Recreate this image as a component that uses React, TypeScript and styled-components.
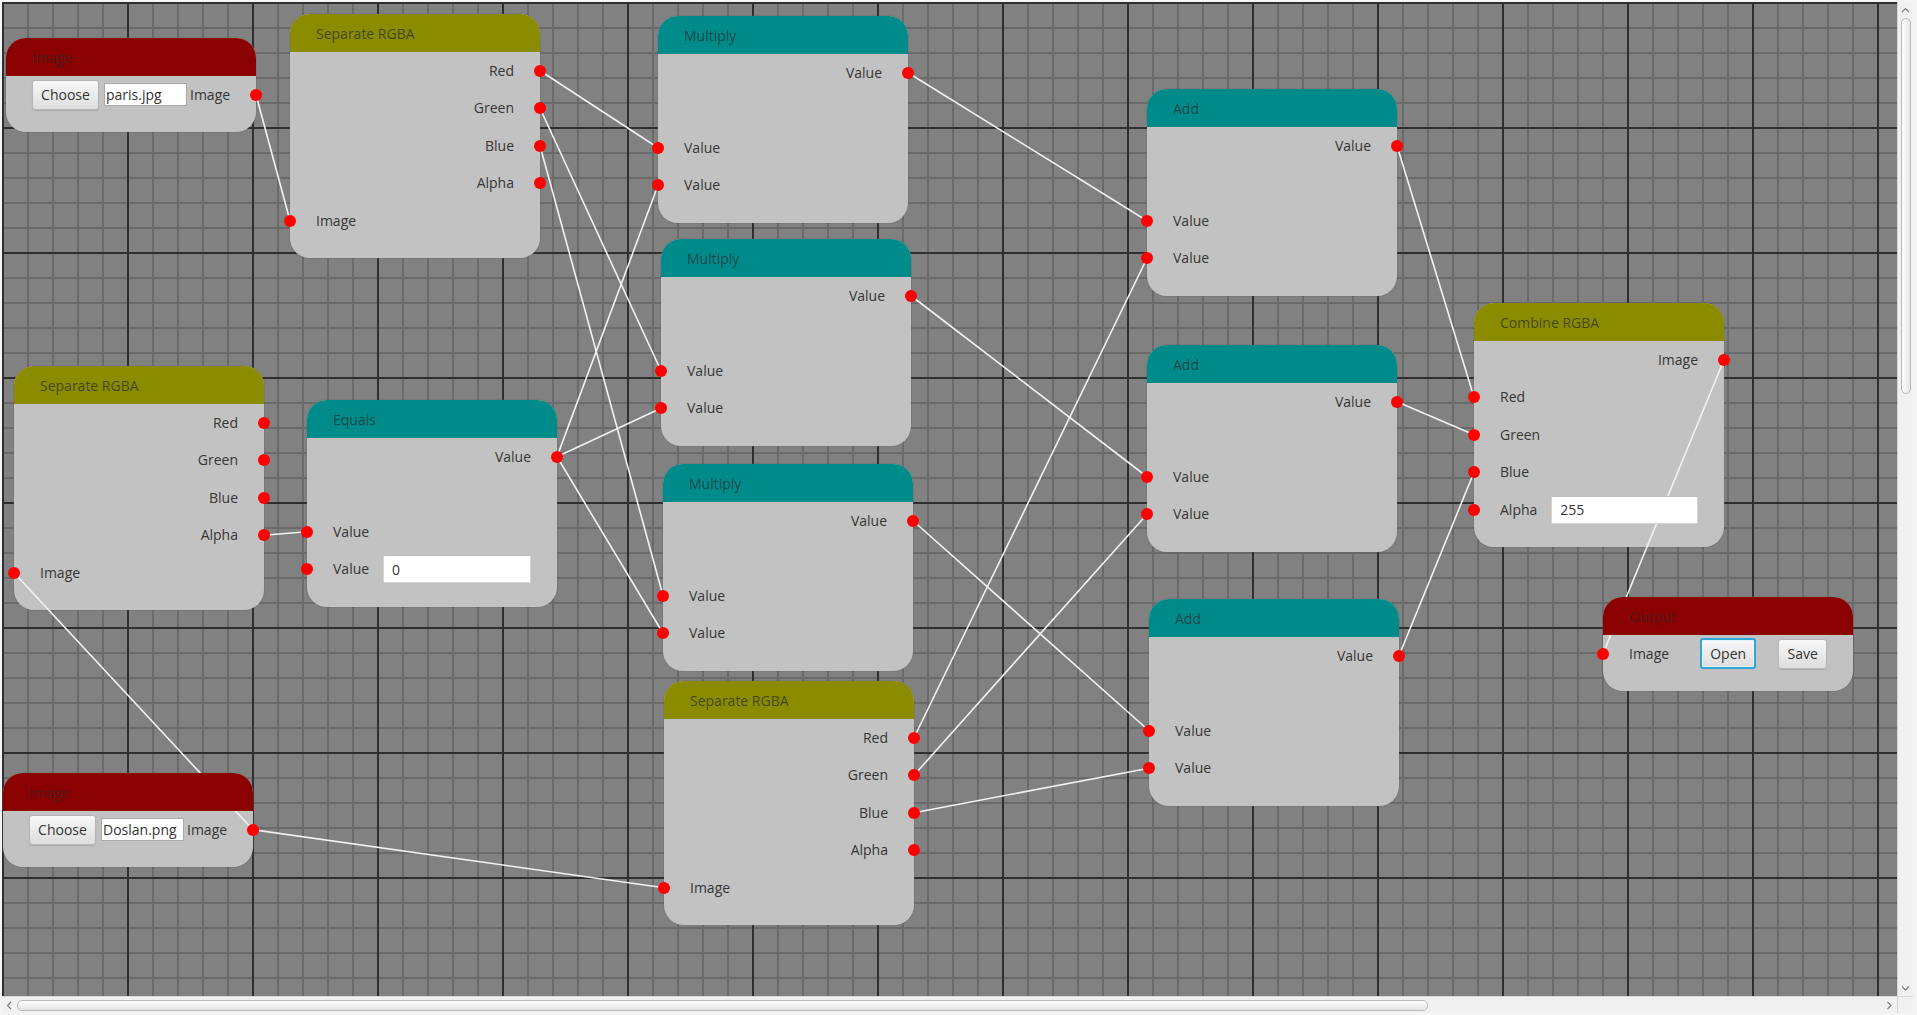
import React from 'react';
import styled, { createGlobalStyle, css } from 'styled-components';

const GlobalStyle = createGlobalStyle`
  html, body { margin: 0; padding: 0; }
  body {
    background: #f2f2f2;
    font-family: "Open Sans", "Noto Sans", "DejaVu Sans", sans-serif;
    overflow: hidden;
  }
  #root { width: 1917px; height: 1015px; }
`;

type Tone = 'red' | 'teal' | 'olive';

type RowDef =
  | { kind: 'out'; label: string }
  | { kind: 'in'; label: string; field?: string }
  | { kind: 'gap' }
  | { kind: 'file'; file: string }
  | { kind: 'output' };

type NodeDef = {
  id: string;
  title: string;
  tone: Tone;
  x: number;
  y: number;
  rows: RowDef[];
};

const CANVAS_X = 2;
const CANVAS_Y = 2;
const NODE_W = 250;
const HEADER_H = 38;
const ROW_H = 37.5;

const sep = (id: string, x: number, y: number): NodeDef => ({
  id,
  title: 'Separate RGBA',
  tone: 'olive',
  x,
  y,
  rows: [
    { kind: 'out', label: 'Red' },
    { kind: 'out', label: 'Green' },
    { kind: 'out', label: 'Blue' },
    { kind: 'out', label: 'Alpha' },
    { kind: 'in', label: 'Image' },
  ],
});

const binary = (id: string, title: string, x: number, y: number, field?: string): NodeDef => ({
  id,
  title,
  tone: 'teal',
  x,
  y,
  rows: [
    { kind: 'out', label: 'Value' },
    { kind: 'gap' },
    { kind: 'in', label: 'Value' },
    { kind: 'in', label: 'Value', field },
  ],
});

const nodes: NodeDef[] = [
  { id: 'img1', title: 'Image', tone: 'red', x: 6, y: 38, rows: [{ kind: 'file', file: 'paris.jpg' }] },
  sep('sepA', 290, 14),
  binary('mulA', 'Multiply', 658, 16),
  binary('mulB', 'Multiply', 661, 239),
  binary('mulC', 'Multiply', 663, 464),
  sep('sepC', 664, 681),
  binary('addA', 'Add', 1147, 89),
  binary('addB', 'Add', 1147, 345),
  binary('addC', 'Add', 1149, 599),
  {
    id: 'combine',
    title: 'Combine RGBA',
    tone: 'olive',
    x: 1474,
    y: 303,
    rows: [
      { kind: 'out', label: 'Image' },
      { kind: 'in', label: 'Red' },
      { kind: 'in', label: 'Green' },
      { kind: 'in', label: 'Blue' },
      { kind: 'in', label: 'Alpha', field: '255' },
    ],
  },
  { id: 'output', title: 'Output', tone: 'red', x: 1603, y: 597, rows: [{ kind: 'output' }] },
  sep('sepB', 14, 366),
  binary('equals', 'Equals', 307, 400, '0'),
  { id: 'img2', title: 'Image', tone: 'red', x: 3, y: 773, rows: [{ kind: 'file', file: 'Doslan.png' }] },
];

const wires: [string, number, string, number][] = [
  ['img1', 0, 'sepA', 4],
  ['sepA', 0, 'mulA', 2],
  ['sepA', 1, 'mulB', 2],
  ['sepA', 2, 'mulC', 2],
  ['equals', 0, 'mulA', 3],
  ['equals', 0, 'mulB', 3],
  ['equals', 0, 'mulC', 3],
  ['sepB', 3, 'equals', 2],
  ['sepB', 4, 'img2', 0],
  ['img2', 0, 'sepC', 4],
  ['mulA', 0, 'addA', 2],
  ['mulB', 0, 'addB', 2],
  ['mulC', 0, 'addC', 2],
  ['sepC', 0, 'addA', 3],
  ['sepC', 1, 'addB', 3],
  ['sepC', 2, 'addC', 3],
  ['addA', 0, 'combine', 1],
  ['addB', 0, 'combine', 2],
  ['addC', 0, 'combine', 3],
  ['combine', 0, 'output', 0],
];

const isOutRow = (r: RowDef) => r.kind === 'out' || r.kind === 'file';

const portPoint = (id: string, row: number) => {
  const n = nodes.find((k) => k.id === id)!;
  const r = n.rows[row];
  const y = n.y + HEADER_H + ROW_H / 2 + ROW_H * row - CANVAS_Y;
  const x = (isOutRow(r) ? n.x + NODE_W : n.x) - CANVAS_X;
  return { x, y };
};

const toneColor: Record<Tone, string> = {
  red: '#8b0000',
  teal: '#008b8b',
  olive: '#8b8b00',
};

/* ---------- window + scroll pane ---------- */

const Window = styled.div`
  width: 1917px;
  height: 1015px;
  box-sizing: border-box;
  padding: 2px 4px 2px 2px;
  background: #f4f4f4;
`;

const ScrollPane = styled.div`
  display: grid;
  grid-template-columns: 1fr 16px;
  grid-template-rows: 1fr 17px;
  width: 100%;
  height: 100%;
`;

const Canvas = styled.div`
  position: relative;
  overflow: hidden;
  background-color: #818181;
  background-image: linear-gradient(to right, #2f2f2f 0, #2f2f2f 2px, transparent 2px),
    linear-gradient(to bottom, #2f2f2f 0, #2f2f2f 2px, transparent 2px),
    linear-gradient(to right, #6a6a6a 0, #6a6a6a 2px, transparent 2px),
    linear-gradient(to bottom, #6a6a6a 0, #6a6a6a 2px, transparent 2px);
  background-size: 125px 100%, 100% 125px, 25px 100%, 100% 25px;
  background-position: 0 0;
`;

const VScroll = styled.div`
  display: flex;
  flex-direction: column;
  align-items: center;
  background: #f1f1f1;
  border-left: 1px solid #d6d6d6;
`;

const HScroll = styled.div`
  display: flex;
  align-items: center;
  background: #f1f1f1;
  border-top: 1px solid #d6d6d6;
`;

const Corner = styled.div`
  background: #f1f1f1;
  border-top: 1px solid #d6d6d6;
  border-left: 1px solid #d6d6d6;
`;

const ArrowBox = styled.div<{ $w: number; $h: number }>`
  width: ${(p) => p.$w}px;
  height: ${(p) => p.$h}px;
  display: flex;
  align-items: center;
  justify-content: center;
  flex: none;
`;

const Spacer = styled.div`
  flex: 1;
`;

const VThumb = styled.div`
  width: 10px;
  height: 376px;
  margin-left: 1px;
  box-sizing: border-box;
  border: 1px solid #b9b9b9;
  border-radius: 5px;
  background: linear-gradient(to right, #fdfdfd, #e6e6e6);
`;

const HThumb = styled.div`
  width: 1411px;
  height: 11px;
  box-sizing: border-box;
  border: 1px solid #b9b9b9;
  border-radius: 5px;
  background: linear-gradient(to bottom, #fdfdfd, #e6e6e6);
`;

const Chevron = ({ dir }: { dir: 'up' | 'down' | 'left' | 'right' }) => {
  const d = {
    up: 'M1 5 L4.5 1.5 L8 5',
    down: 'M1 1.5 L4.5 5 L8 1.5',
    left: 'M5 1 L1.5 4.5 L5 8',
    right: 'M1.5 1 L5 4.5 L1.5 8',
  }[dir];
  const vertical = dir === 'up' || dir === 'down';
  return (
    <svg width={vertical ? 9 : 7} height={vertical ? 7 : 9} viewBox={vertical ? '0 0 9 7' : '0 0 7 9'}>
      <path d={d} fill="none" stroke="#7a7a7a" strokeWidth="1.1" />
    </svg>
  );
};

/* ---------- nodes ---------- */

const NodeCard = styled.div`
  position: absolute;
  width: ${NODE_W}px;
  display: flex;
  flex-direction: column;
  border-radius: 20px;
  background: #c2c2c2;
  box-shadow: 0 0 0 1px rgba(90, 90, 90, 0.18);
`;

const Header = styled.div<{ $tone: Tone }>`
  position: relative;
  z-index: 2;
  height: ${HEADER_H}px;
  display: flex;
  align-items: center;
  padding-left: 26px;
  border-radius: 20px 20px 0 0;
  background: ${(p) => toneColor[p.$tone]};
  color: rgba(40, 40, 40, 0.7);
  font-size: 14px;
`;

const Body = styled.div`
  display: flex;
  flex-direction: column;
  padding: 0 26px 18.5px;
`;

const Row = styled.div<{ $out?: boolean }>`
  position: relative;
  height: ${ROW_H}px;
  display: flex;
  align-items: center;
  justify-content: ${(p) => (p.$out ? 'flex-end' : 'flex-start')};
`;

const Port = styled.span<{ $out?: boolean }>`
  position: absolute;
  z-index: 2;
  top: 50%;
  width: 12px;
  height: 12px;
  margin-top: -6px;
  border-radius: 50%;
  background: #ff0000;
  ${(p) => (p.$out ? css`right: -32px;` : css`left: -32px;`)}
`;

const Label = styled.span`
  font-size: 14px;
  color: #363636;
  white-space: nowrap;
  line-height: 20px;
`;

const ValueField = styled.input`
  position: relative;
  z-index: 2;
  flex: 1;
  min-width: 0;
  height: 28px;
  box-sizing: border-box;
  margin-left: 14px;
  padding: 0 8px;
  border: 1px solid #d4d4d4;
  border-top-color: #bcbcbc;
  border-radius: 2px;
  background: #ffffff;
  font-family: inherit;
  font-size: 14px;
  color: #333;
  outline: none;
`;

const FileField = styled.input`
  position: relative;
  z-index: 2;
  width: 83px;
  height: 23px;
  box-sizing: border-box;
  margin: 0 3px 0 5px;
  padding: 0 1px;
  border: 1px solid #a9a9a9;
  background: #ffffff;
  font-family: inherit;
  font-size: 14px;
  color: #333;
  outline: none;
`;

const FxButton = styled.button<{ $w: number; $focused?: boolean; $ml?: number }>`
  position: relative;
  z-index: 2;
  width: ${(p) => p.$w}px;
  height: 30px;
  flex: none;
  box-sizing: border-box;
  margin-left: ${(p) => p.$ml ?? 0}px;
  padding: 0;
  border: 1px solid #b6b6b6;
  border-radius: 3px;
  background: linear-gradient(to bottom, #f8f8f8, #dddddd);
  box-shadow: 0 1px 1px rgba(0, 0, 0, 0.12);
  font-family: inherit;
  font-size: 14px;
  color: #333;
  ${(p) =>
    p.$focused &&
    css`
      height: 31px;
      border: 2px solid #2fa6d6;
      box-shadow: inset 0 0 0 1px #e6f4fb;
    `}
`;

const NodeRow = ({ row }: { row: RowDef }) => {
  switch (row.kind) {
    case 'gap':
      return <Row />;
    case 'out':
      return (
        <Row $out>
          <Label>{row.label}</Label>
          <Port $out />
        </Row>
      );
    case 'in':
      return (
        <Row>
          <Port />
          <Label>{row.label}</Label>
          {row.field !== undefined && <ValueField readOnly defaultValue={row.field} />}
        </Row>
      );
    case 'file':
      return (
        <Row>
          <FxButton $w={67}>Choose</FxButton>
          <FileField readOnly defaultValue={row.file} />
          <Label>Image</Label>
          <Port $out />
        </Row>
      );
    case 'output':
      return (
        <Row>
          <Port />
          <Label>Image</Label>
          <FxButton $w={56} $ml={31} $focused>
            Open
          </FxButton>
          <FxButton $w={49} $ml={22}>
            Save
          </FxButton>
        </Row>
      );
  }
};

const GraphNode = ({ node }: { node: NodeDef }) => (
  <NodeCard style={{ left: node.x - CANVAS_X, top: node.y - CANVAS_Y }}>
    <Header $tone={node.tone}>{node.title}</Header>
    <Body>
      {node.rows.map((r, i) => (
        <NodeRow key={i} row={r} />
      ))}
    </Body>
  </NodeCard>
);

const WireLayer = styled.svg`
  position: absolute;
  left: 0;
  top: 0;
  width: 100%;
  height: 100%;
  z-index: 1;
  pointer-events: none;
`;

export default function App() {
  return (
    <>
      <GlobalStyle />
      <Window>
        <ScrollPane>
          <Canvas>
            {nodes.map((n) => (
              <GraphNode key={n.id} node={n} />
            ))}
            <WireLayer>
              {wires.map(([a, ai, b, bi], i) => {
                const p = portPoint(a, ai);
                const q = portPoint(b, bi);
                return <line key={i} x1={p.x} y1={p.y} x2={q.x} y2={q.y} stroke="#f2f2f2" strokeWidth={1.6} />;
              })}
            </WireLayer>
          </Canvas>
          <VScroll>
            <ArrowBox $w={15} $h={16}>
              <Chevron dir="up" />
            </ArrowBox>
            <VThumb />
            <Spacer />
            <ArrowBox $w={15} $h={16}>
              <Chevron dir="down" />
            </ArrowBox>
          </VScroll>
          <HScroll>
            <ArrowBox $w={15} $h={16}>
              <Chevron dir="left" />
            </ArrowBox>
            <HThumb />
            <Spacer />
            <ArrowBox $w={16} $h={16}>
              <Chevron dir="right" />
            </ArrowBox>
          </HScroll>
          <Corner />
        </ScrollPane>
      </Window>
    </>
  );
}
